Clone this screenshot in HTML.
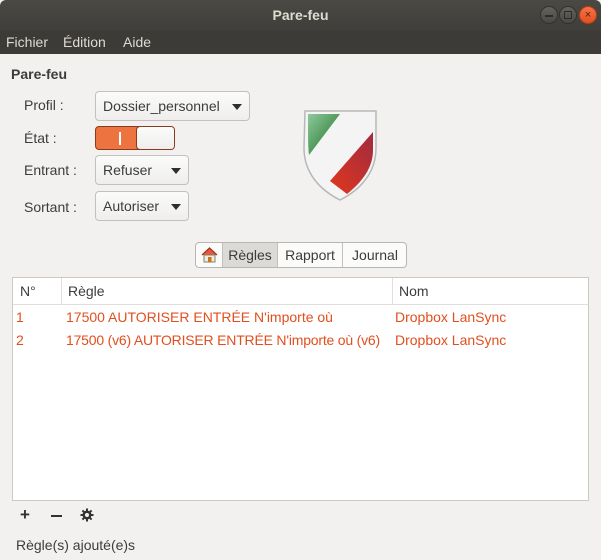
<!DOCTYPE html>
<html><head><meta charset="utf-8"><style>
*{box-sizing:border-box;margin:0;padding:0}
body{width:601px;height:560px;background:#f2f1f0;font-family:"Liberation Sans",sans-serif;font-size:14px;color:#3c3c3c;position:relative;overflow:hidden}
.abs{position:absolute}
#title{left:0;top:0;width:601px;height:31px;background:linear-gradient(#4b4944,#3f3e3a);border-radius:6px 6px 0 0;color:#dfdbd2;font-weight:bold;text-align:center;line-height:31px;font-size:14px}
#menu{left:0;top:31px;width:601px;height:23px;background:#3c3b37;color:#dfdbd2;font-size:14px;line-height:23px}
.wb{top:6px;width:18px;height:18px;border-radius:50%;background:linear-gradient(#65635e,#4a4844);border:1px solid #33322e}
.btn{background:linear-gradient(#fbfbfa,#efeeed);border:1px solid #c4c1bc;border-radius:4px;height:30px;line-height:28px;padding-left:7px}
.arr{position:absolute;right:7px;top:12px;width:0;height:0;border-left:5px solid transparent;border-right:5px solid transparent;border-top:6px solid #2e2e2e}
.lbl{left:24px}
.red{color:#e24f1f}
</style></head><body>
<div id="title" class="abs">Pare-feu</div>
<div class="abs wb" style="left:540px"><div style="position:absolute;left:4px;top:8px;width:8px;height:1.5px;background:#2d2c29"></div></div>
<div class="abs wb" style="left:559px"><div style="position:absolute;left:4px;top:4px;width:8px;height:8px;border:1.5px solid #2d2c29"></div></div>
<div class="abs wb" style="left:579px;background:linear-gradient(#f4744a,#e0501f);border-color:#b13c14;color:#5a1a05;font-size:11px;text-align:center;line-height:16px">×</div>
<div id="menu" class="abs"><span style="position:absolute;left:6px">Fichier</span><span style="position:absolute;left:63px">Édition</span><span style="position:absolute;left:123px">Aide</span></div>

<div class="abs" style="left:11px;top:66px;font-weight:bold">Pare-feu</div>
<div class="abs lbl" style="top:97px">Profil :</div>
<div class="abs lbl" style="top:130px">État :</div>
<div class="abs lbl" style="top:162px">Entrant :</div>
<div class="abs lbl" style="top:199px">Sortant :</div>

<div class="abs btn" style="left:95px;top:91px;width:155px">Dossier_personnel<span class="arr"></span></div>
<div class="abs" style="left:95px;top:126px;width:80px;height:24px;border:1px solid #8a3a1f;border-radius:4px;background:#ed7341;overflow:hidden">
 <div style="position:absolute;left:23px;top:5px;width:2px;height:13px;background:#fff"></div>
 <div style="position:absolute;left:40px;top:-1px;width:40px;height:24px;background:linear-gradient(#fbfbfa,#efeeed);border:1px solid #8a3a1f;border-radius:4px"></div>
</div>
<div class="abs btn" style="left:95px;top:155px;width:94px">Refuser<span class="arr"></span></div>
<div class="abs btn" style="left:95px;top:191px;width:94px">Autoriser<span class="arr"></span></div>

<svg class="abs" style="left:300px;top:108px" width="80" height="95" viewBox="0 0 80 95">
<defs>
<linearGradient id="g" x1="0" y1="0" x2="1" y2="1"><stop offset="0" stop-color="#8fc99a"/><stop offset="1" stop-color="#176d23"/></linearGradient>
<linearGradient id="r" x1="0" y1="1" x2="1" y2="0"><stop offset="0" stop-color="#e2371d"/><stop offset="1" stop-color="#a02b40"/></linearGradient>
</defs>
<path d="M5 3 H76 V40 C76 65 60 82 40 92 C20 82 4 65 4 40 Z" fill="#f4f4f4" stroke="#b8b8b8" stroke-width="1.5"/>
<path d="M8 6 H40 L9 47 C8 40 8 30 8 6 Z" fill="url(#g)"/>
<path d="M73 24 V42 C73 60 62 74 47 86 L30 73 Z" fill="url(#r)"/>
</svg>

<div class="abs" style="left:195px;top:242px;width:212px;height:26px;border:1px solid #b9b6b0;border-radius:4px;background:#fbfbfa;overflow:hidden;line-height:24px">
 <div style="position:absolute;left:0;top:0;width:27px;height:24px;border-right:1px solid #c4c1bc">
  <svg width="27" height="24"><path d="M6 12 L13.5 5 L21 12" fill="#e5593d" stroke="#a8321d" stroke-width="1.2"/><rect x="8" y="12" width="11" height="7" fill="#f0ebe0" stroke="#8a7d68"/><rect x="12" y="14" width="3.5" height="5" fill="#c9741c"/></svg>
 </div>
 <div style="position:absolute;left:27px;top:0;width:55px;height:24px;background:#dcdad6;border-right:1px solid #c4c1bc;text-align:center">Règles</div>
 <div style="position:absolute;left:82px;top:0;width:65px;height:24px;border-right:1px solid #c4c1bc;text-align:center">Rapport</div>
 <div style="position:absolute;left:147px;top:0;width:64px;text-align:center">Journal</div>
</div>

<div class="abs" style="left:12px;top:277px;width:577px;height:224px;background:#fff;border:1px solid #cdc9c3">
 <div style="position:absolute;left:0;top:0;width:575px;height:27px;border-bottom:1px solid #e1dedb;line-height:27px">
  <span style="position:absolute;left:7px">N°</span>
  <span style="position:absolute;left:48px;top:0;height:27px;border-left:1px solid #e1dedb;padding-left:6px">Règle</span>
  <span style="position:absolute;left:379px;top:0;height:27px;border-left:1px solid #e1dedb;padding-left:6px">Nom</span>
 </div>
 <div class="red" style="position:absolute;top:31px;left:3px">1</div>
 <div class="red" style="position:absolute;top:31px;left:53px">17500 AUTORISER ENTRÉE N'importe où</div>
 <div class="red" style="position:absolute;top:31px;left:382px">Dropbox LanSync</div>
 <div class="red" style="position:absolute;top:54px;left:3px">2</div>
 <div class="red" style="position:absolute;top:54px;left:53px;letter-spacing:-0.2px">17500 (v6) AUTORISER ENTRÉE N'importe où (v6)</div>
 <div class="red" style="position:absolute;top:54px;left:382px">Dropbox LanSync</div>
</div>

<div class="abs" style="left:20px;top:505px;font-size:17px;font-weight:bold;color:#333">+</div>
<div class="abs" style="left:51px;top:515px;width:11px;height:2px;background:#333"></div>
<svg class="abs" style="left:80px;top:508px" width="14" height="14" viewBox="0 0 14 14"><g fill="#333"><circle cx="7" cy="7" r="4.5"/><rect x="6" y="0.5" width="2" height="13"/><rect x="0.5" y="6" width="13" height="2"/><rect x="6" y="0.5" width="2" height="13" transform="rotate(45 7 7)"/><rect x="6" y="0.5" width="2" height="13" transform="rotate(-45 7 7)"/></g><circle cx="7" cy="7" r="2" fill="#f2f1f0"/></svg>
<div class="abs" style="left:16px;top:537px">Règle(s) ajouté(e)s</div>
</body></html>
